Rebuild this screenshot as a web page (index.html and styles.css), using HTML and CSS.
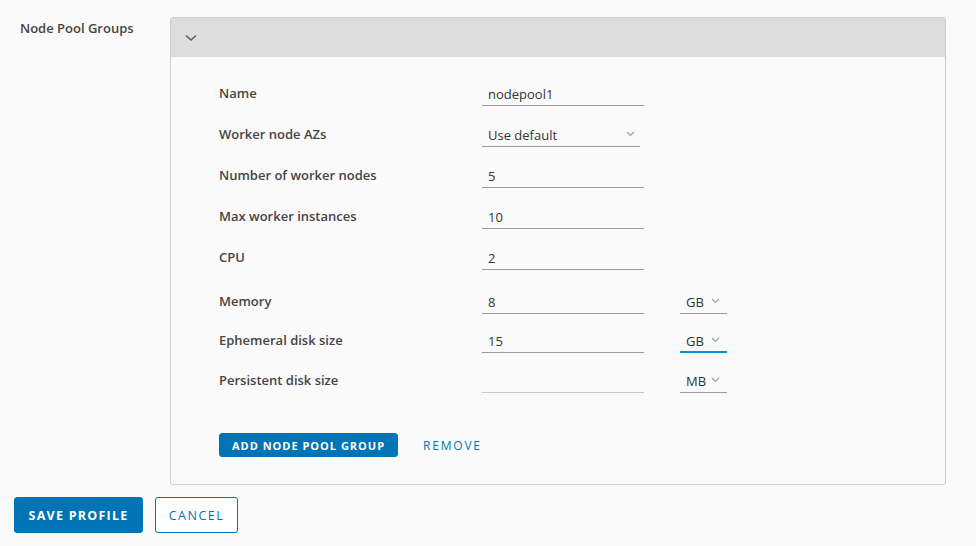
FILE: index.html
```html
<!DOCTYPE html>
<html lang="en">
<head>
<meta charset="utf-8">
<title>Node Pool Groups</title>
<link rel="stylesheet" href="styles.css">
</head>
<body>
<div class="page">
  <div class="form-group">
    <div class="group-label">Node Pool Groups</div>
    <div class="card">
      <div class="card-header">
        <svg class="chev" width="12" height="8" viewBox="0 0 12 8"><path d="M1 1.5 L6 6 L11 1.5" fill="none" stroke="#5c5c5c" stroke-width="1.4"/></svg>
      </div>
      <div class="card-body">
        <div class="row first">
          <label class="row-label">Name</label>
          <div class="input">nodepool1</div>
        </div>
        <div class="row">
          <label class="row-label">Worker node AZs</label>
          <div class="select wide">
            <span>Use default</span>
            <svg class="sel-chev" width="9" height="6" viewBox="0 0 9 6"><path d="M1 1 L4.5 4.5 L8 1" fill="none" stroke="#a0a0a0" stroke-width="1.2"/></svg>
          </div>
        </div>
        <div class="row">
          <label class="row-label">Number of worker nodes</label>
          <div class="input">5</div>
        </div>
        <div class="row">
          <label class="row-label">Max worker instances</label>
          <div class="input">10</div>
        </div>
        <div class="row">
          <label class="row-label">CPU</label>
          <div class="input">2</div>
        </div>
        <div class="row row-unit unit-first">
          <label class="row-label">Memory</label>
          <div class="input">8</div>
          <div class="select unit">
            <span>GB</span>
            <svg class="sel-chev" width="9" height="6" viewBox="0 0 9 6"><path d="M1 1 L4.5 4.5 L8 1" fill="none" stroke="#a0a0a0" stroke-width="1.2"/></svg>
          </div>
        </div>
        <div class="row row-unit">
          <label class="row-label">Ephemeral disk size</label>
          <div class="input">15</div>
          <div class="select unit focused">
            <span>GB</span>
            <svg class="sel-chev" width="9" height="6" viewBox="0 0 9 6"><path d="M1 1 L4.5 4.5 L8 1" fill="none" stroke="#a0a0a0" stroke-width="1.2"/></svg>
          </div>
        </div>
        <div class="row row-unit last">
          <label class="row-label">Persistent disk size</label>
          <div class="input empty"></div>
          <div class="select unit">
            <span>MB</span>
            <svg class="sel-chev" width="9" height="6" viewBox="0 0 9 6"><path d="M1 1 L4.5 4.5 L8 1" fill="none" stroke="#a0a0a0" stroke-width="1.2"/></svg>
          </div>
        </div>
        <div class="card-actions">
          <button class="btn btn-sm btn-primary">ADD NODE POOL GROUP</button>
          <button class="btn btn-sm btn-link">REMOVE</button>
        </div>
      </div>
    </div>
  </div>
  <div class="footer">
    <button class="btn btn-lg btn-primary">SAVE PROFILE</button>
    <button class="btn btn-lg btn-outline">CANCEL</button>
  </div>
</div>
</body>
</html>
```

FILE: styles.css
```css
html, body {
  margin: 0;
  padding: 0;
  background: #fafafa;
  font-family: "Open Sans", "Liberation Sans", sans-serif;
  color: #454545;
}

.page {
  padding-top: 17px;
}

.form-group {
  display: flex;
  align-items: flex-start;
}

.group-label {
  width: 150px;
  padding-left: 20px;
  padding-top: 2px;
  font-size: 13px;
  font-weight: 600;
  color: #454545;
}

.card {
  width: 774px;
  border: 1px solid #cccccc;
  border-radius: 3px;
  background: #fafafa;
  overflow: hidden;
}

.card-header {
  height: 39px;
  background: #dddddd;
  display: flex;
  align-items: center;
  padding-left: 14px;
}

.chev {
  display: block;
  margin-top: 1px;
}

.card-body {
  padding: 25px 0 27px 48px;
  display: flex;
  flex-direction: column;
}

.row {
  display: flex;
  align-items: center;
  height: 24px;
  margin-top: 17px;
}

.row.first {
  margin-top: 0;
}

.row-unit {
  margin-top: 15px;
}

.row-unit.unit-first {
  margin-top: 20px;
}

.row-unit.last {
  margin-top: 16px;
}

.row-label {
  width: 263px;
  font-size: 13px;
  font-weight: 600;
  color: #454545;
  margin-top: -2px;
}

.input {
  box-sizing: border-box;
  width: 162px;
  height: 24px;
  line-height: 24px;
  padding-left: 6px;
  font-size: 13px;
  color: #333333;
  border-bottom: 1px solid #9a9a9a;
}

.input.empty {
  border-bottom-color: #c8c8c8;
}

.select {
  box-sizing: border-box;
  height: 24px;
  display: flex;
  align-items: center;
  justify-content: space-between;
  padding-left: 6px;
  padding-top: 1px;
  font-size: 13px;
  color: #333333;
  border-bottom: 1px solid #9a9a9a;
}

.select.wide {
  width: 158px;
  padding-right: 5px;
}

.select.unit {
  width: 47px;
  margin-left: 36px;
  padding-right: 7px;
}

.select.focused {
  border-bottom: 2px solid #0095d3;
}

.sel-chev {
  display: block;
  margin-top: -2px;
}

.card-actions {
  display: flex;
  align-items: center;
  margin-top: 40px;
}

.btn {
  font-family: "Open Sans", "Liberation Sans", sans-serif;
  font-weight: 700;
  letter-spacing: 0.09em;
  border-radius: 3px;
  cursor: pointer;
  padding: 0;
}

.btn-sm {
  height: 24px;
  font-size: 11px;
}

.btn-primary {
  background: #0074b4;
  color: #ffffff;
  border: 1px solid #0074b4;
}

.card-actions .btn-primary {
  width: 179px;
}

.btn-link {
  background: transparent;
  border: none;
  color: #0074b4;
  font-weight: 400;
  font-size: 12px;
  letter-spacing: 0.15em;
  margin-left: 25px;
}

.footer {
  display: flex;
  gap: 12px;
  padding-left: 14px;
  margin-top: 12px;
}

.btn-lg {
  height: 36px;
  font-size: 12.5px;
}

.footer .btn-primary {
  width: 129px;
  letter-spacing: 0.1em;
}

.btn-outline {
  width: 83px;
  background: #ffffff;
  color: #0074b4;
  border: 1px solid #0074b4;
  font-weight: 400;
  letter-spacing: 0.12em;
}
```
